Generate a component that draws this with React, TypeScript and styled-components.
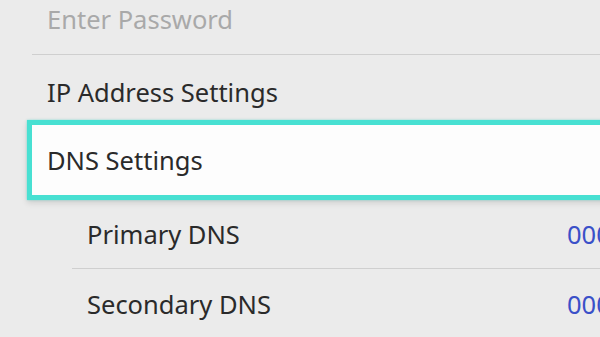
import { FC } from 'react';
import styled, { createGlobalStyle } from 'styled-components';

const GlobalStyle = createGlobalStyle`
  html, body {
    margin: 0;
    padding: 0;
    background: #ebebeb;
    overflow: hidden;
  }
  body {
    font-family: 'Noto Sans', 'Open Sans', sans-serif;
  }
`;

export const Screen = styled.div`
  width: 600px;
  height: 337px;
  overflow: hidden;
  background: #ebebeb;
`;

export const SettingsList = styled.div`
  display: flex;
  flex-direction: column;
  margin-top: -16px;
  padding-left: 32px;
`;

export const SettingRow = styled.div<{ height: number; divider?: boolean; indent?: number; shift?: number }>`
  display: flex;
  align-items: center;
  justify-content: space-between;
  height: ${({ height }) => height}px;
  margin-left: ${({ indent }) => indent ?? 0}px;
  padding-left: 15px;
  padding-top: ${({ shift }) => shift ?? 0}px;
  border-bottom: ${({ divider }) => (divider ? '1px solid #cfcfcf' : 'none')};
  box-sizing: border-box;
  flex-shrink: 0;
`;

export const FocusedRow = styled.div`
  display: flex;
  align-items: center;
  height: 80px;
  margin-left: -5px;
  margin-right: -40px;
  padding-left: 15px;
  background: #fdfdfd;
  border: 5px solid #48e0d2;
  box-shadow: 0 3px 6px rgba(0, 0, 0, 0.12), 0 0 2px rgba(72, 224, 210, 0.6);
  box-sizing: border-box;
  flex-shrink: 0;
`;

export const Label = styled.span<{ muted?: boolean }>`
  font-size: 25.5px;
  color: ${({ muted }) => (muted ? '#a9a9a9' : '#2a2a2a')};
  white-space: nowrap;
`;

export const Value = styled.span`
  font-size: 25.5px;
  color: #3a50c8;
  white-space: nowrap;
  width: 33px;
  overflow: hidden;
`;

const DnsItem: FC<{ label: string; value: string; divider?: boolean }> = ({ label, value, divider }) => (
  <SettingRow height={69} indent={40} divider={divider}>
    <Label>{label}</Label>
    <Value>{value}</Value>
  </SettingRow>
);

export default function App() {
  return (
    <Screen>
      <GlobalStyle />
      <SettingsList>
        <SettingRow height={71} divider>
          <Label muted>Enter Password</Label>
        </SettingRow>
        <SettingRow height={65} shift={8}>
          <Label>IP Address Settings</Label>
        </SettingRow>
        <FocusedRow>
          <Label>DNS Settings</Label>
        </FocusedRow>
        <DnsItem label="Primary DNS" value="000.000.000.000" divider />
        <DnsItem label="Secondary DNS" value="000.000.000.000" />
      </SettingsList>
    </Screen>
  );
}
